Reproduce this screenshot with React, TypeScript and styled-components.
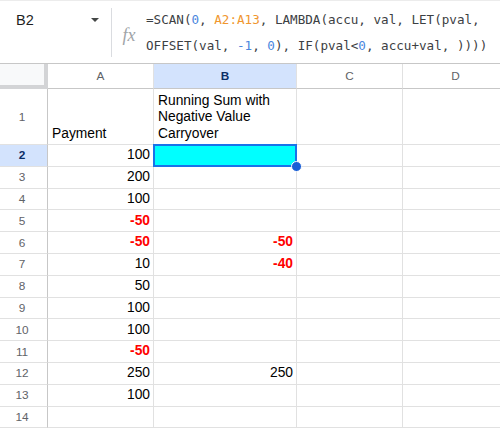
import React from "react";
import styled, { createGlobalStyle } from "styled-components";

const Global = createGlobalStyle`
  html, body { margin: 0; padding: 0; background: #fff; overflow: hidden; }
  body { font-family: "Liberation Sans", Arial, sans-serif; }
  * { box-sizing: border-box; }
`;

const Page = styled.div`
  width: 500px;
  height: 428px;
  overflow: hidden;
  display: flex;
  flex-direction: column;
`;

const FormulaBar = styled.div`
  height: 64px;
  flex: none;
  display: flex;
  border-top: 1px solid #ececec;
  border-bottom: 1px solid #c7c7c7;
`;

const NameBox = styled.div`
  width: 111px;
  flex: none;
  display: flex;
  align-items: flex-start;
  justify-content: space-between;
  padding: 11px 12px 0 16px;
  font-size: 14.5px;
  color: #1f1f1f;
`;

const Caret = styled.span`
  margin-top: 6px;
  width: 0;
  height: 0;
  border-left: 4.5px solid transparent;
  border-right: 4.5px solid transparent;
  border-top: 4.5px solid #444746;
`;

const Divider = styled.div`
  width: 1px;
  flex: none;
  margin: 7px 0 6px;
  background: #dadce0;
`;

const Fx = styled.div`
  width: 34px;
  flex: none;
  display: flex;
  align-items: center;
  justify-content: center;
  padding-top: 6px;
  font-family: "Liberation Serif", "Times New Roman", serif;
  font-style: italic;
  font-size: 18px;
  color: #a0a4a8;
`;

const Formula = styled.div`
  flex: 1;
  padding-top: 6px;
  font-family: "DejaVu Sans Mono", "Liberation Mono", monospace;
  font-size: 12.6px;
  line-height: 26px;
  color: #3c4043;
`;

const FormulaLine = styled.div`
  white-space: pre;
`;

const Num = styled.span`
  color: #4a86dd;
`;

const Ref = styled.span`
  color: #f0962e;
`;

const Grid = styled.div`
  display: grid;
  grid-template-columns: 48px 106px 143px 106px 106px;
  grid-template-rows: 25px 56px repeat(13, 21.8px);
`;

const Corner = styled.div`
  background: #f8f9fa;
  border-right: 4px solid #d3d4d6;
  border-bottom: 4px solid #d3d4d6;
`;

const ColHead = styled.div<{ $active?: boolean }>`
  display: flex;
  align-items: center;
  justify-content: center;
  font-size: 11.8px;
  border-right: 1px solid #e1e1e1;
  border-bottom: 1px solid #c7c7c7;
  background: ${(p) => (p.$active ? "#d3e3fd" : "#fff")};
  color: ${(p) => (p.$active ? "#0b2e66" : "#5f6368")};
  font-weight: ${(p) => (p.$active ? "bold" : "normal")};
`;

const RowHead = styled.div<{ $active?: boolean }>`
  display: flex;
  align-items: center;
  justify-content: center;
  padding-right: 3px;
  font-size: 11.8px;
  border-right: 1px solid #c7c7c7;
  border-bottom: 1px solid #e1e1e1;
  background: ${(p) => (p.$active ? "#d3e3fd" : "#fff")};
  color: ${(p) => (p.$active ? "#0b2e66" : "#5f6368")};
  font-weight: ${(p) => (p.$active ? "bold" : "normal")};
`;

const Cell = styled.div<{ $right?: boolean; $neg?: boolean }>`
  position: relative;
  display: flex;
  align-items: flex-end;
  justify-content: ${(p) => (p.$right ? "flex-end" : "flex-start")};
  padding: 0 3px 2px 4px;
  font-size: 13.8px;
  line-height: 16.5px;
  border-right: 1px solid #e1e1e1;
  border-bottom: 1px solid #e1e1e1;
  color: ${(p) => (p.$neg ? "#ff0000" : "#000")};
  font-weight: ${(p) => (p.$neg ? "bold" : "normal")};
`;

const SelectedCell = styled(Cell)`
  background: #00ffff;
`;

const SelectionFrame = styled.div`
  position: absolute;
  top: -1px;
  left: -1px;
  right: -1px;
  bottom: -1px;
  border: 2px solid #1a73e8;
  pointer-events: none;
`;

const FillHandle = styled.div`
  position: absolute;
  right: -6px;
  bottom: -6px;
  width: 11px;
  height: 11px;
  border-radius: 50%;
  background: #1a5fd6;
  border: 1px solid #fff;
  z-index: 2;
`;

const colA: (number | null)[] = [100, 200, 100, -50, -50, 10, 50, 100, 100, -50, 250, 100, null];
const colB: Record<number, number> = { 6: -50, 7: -40, 12: 250 };

export default function App() {
  return (
    <Page>
      <Global />
      <FormulaBar>
        <NameBox>
          <span>B2</span>
          <Caret />
        </NameBox>
        <Divider />
        <Fx>fx</Fx>
        <Formula>
          <FormulaLine>
            =SCAN(<Num>0</Num>, <Ref>A2:A13</Ref>, LAMBDA(accu, val, LET(pval,
          </FormulaLine>
          <FormulaLine>
            OFFSET(val, <Num>-1</Num>, <Num>0</Num>), IF(pval&lt;<Num>0</Num>, accu+val, ))))
          </FormulaLine>
        </Formula>
      </FormulaBar>
      <Grid>
        <Corner />
        <ColHead>A</ColHead>
        <ColHead $active>B</ColHead>
        <ColHead>C</ColHead>
        <ColHead>D</ColHead>

        <RowHead>1</RowHead>
        <Cell>Payment</Cell>
        <Cell>Running Sum with Negative Value Carryover</Cell>
        <Cell />
        <Cell />

        {colA.map((v, i) => {
          const row = i + 2;
          const b = colB[row];
          return (
            <React.Fragment key={row}>
              <RowHead $active={row === 2}>{row}</RowHead>
              <Cell $right $neg={v !== null && v < 0}>
                {v ?? ""}
              </Cell>
              {row === 2 ? (
                <SelectedCell>
                  <SelectionFrame />
                  <FillHandle />
                </SelectedCell>
              ) : (
                <Cell $right $neg={b !== undefined && b < 0}>
                  {b ?? ""}
                </Cell>
              )}
              <Cell />
              <Cell />
            </React.Fragment>
          );
        })}
      </Grid>
    </Page>
  );
}
